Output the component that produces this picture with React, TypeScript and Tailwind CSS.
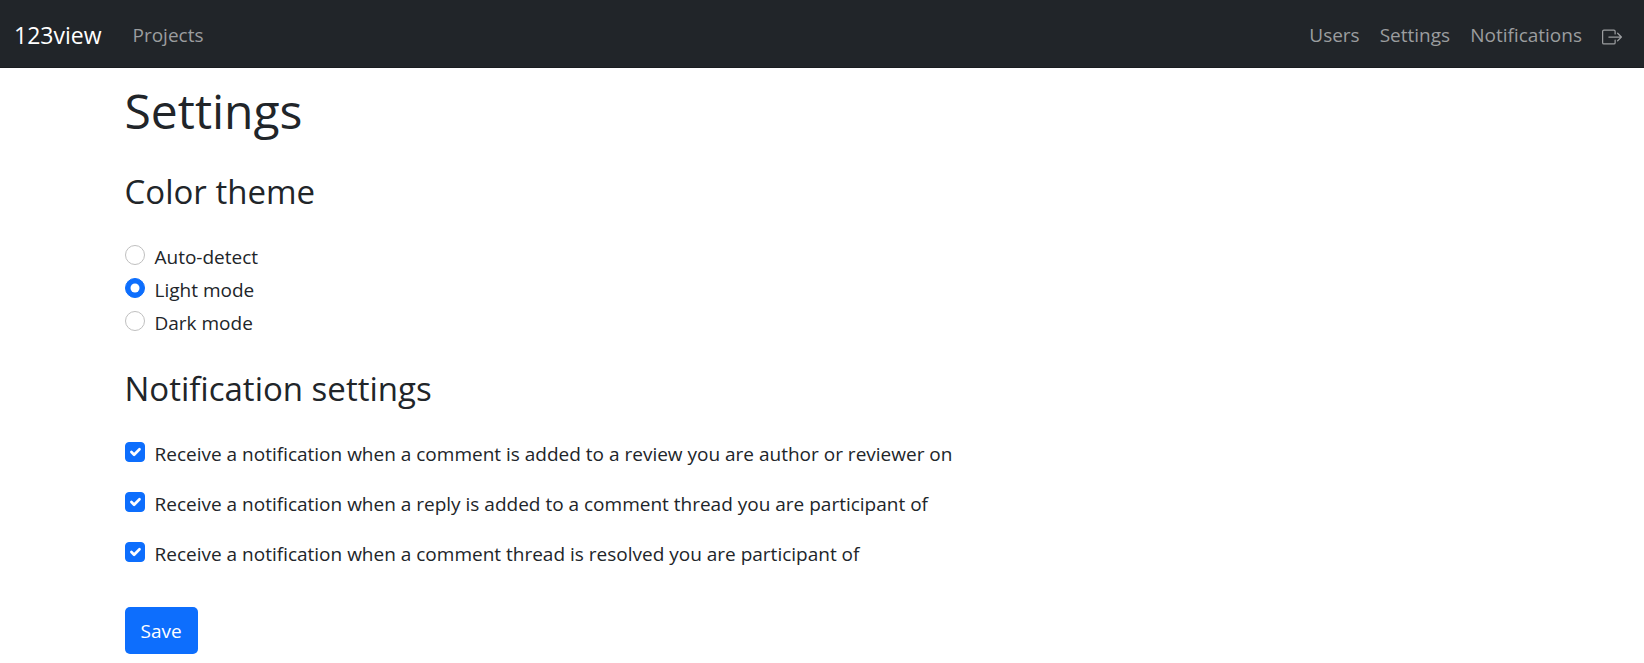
import { useState } from 'react';
import { BsBoxArrowRight } from 'react-icons/bs';

const themes = [
  { value: 'auto', label: 'Auto-detect' },
  { value: 'light', label: 'Light mode' },
  { value: 'dark', label: 'Dark mode' },
];

const notifications = [
  { id: 'comment-added', label: 'Receive a notification when a comment is added to a review you are author or reviewer on' },
  { id: 'comment-reply', label: 'Receive a notification when a reply is added to a comment thread you are participant of' },
  { id: 'comment-resolved', label: 'Receive a notification when a comment thread is resolved you are participant of' },
];

function NavLink({ href, children }: { href: string; children: string }) {
  return (
    <a href={href} className="text-[#9b9d9f] hover:text-white">
      {children}
    </a>
  );
}

function Navbar() {
  return (
    <nav className="flex h-[68px] items-center border-b border-[#1a1d20] bg-[#212529] pt-[3px] pr-[22px] pl-[14px]">
      <a href="#home" className="mr-[31px] text-[23px] text-white">
        123view
      </a>
      <NavLink href="#projects">Projects</NavLink>
      <div className="ml-auto flex items-center gap-5">
        <NavLink href="#users">Users</NavLink>
        <NavLink href="#settings">Settings</NavLink>
        <NavLink href="#notifications">Notifications</NavLink>
        <a href="#logout" aria-label="Log out" className="pt-[3px] text-[#9b9d9f] hover:text-white">
          <BsBoxArrowRight className="size-5" />
        </a>
      </div>
    </nav>
  );
}

function ThemeOption({ value, label, checked, onSelect }: { value: string; label: string; checked: boolean; onSelect: () => void }) {
  const id = `theme-${value}`;
  return (
    <div className="flex gap-[10px]">
      <span className="mt-1 grid size-5 shrink-0">
        <input
          type="radio"
          id={id}
          name="theme"
          value={value}
          checked={checked}
          onChange={onSelect}
          className="peer col-start-1 row-start-1 size-5 appearance-none rounded-full border border-[#bfbfbf] bg-white checked:border-[#0d6efd] checked:bg-[#0d6efd]"
        />
        <svg viewBox="0 0 20 20" aria-hidden="true" className="pointer-events-none col-start-1 row-start-1 hidden size-5 peer-checked:block">
          <circle cx="10" cy="10" r="4.5" fill="#fff" />
        </svg>
      </span>
      <label htmlFor={id}>{label}</label>
    </div>
  );
}

function NotificationOption({ id, label }: { id: string; label: string }) {
  return (
    <div className="flex gap-[10px]">
      <span className="mt-1 grid size-5 shrink-0">
        <input
          type="checkbox"
          id={id}
          defaultChecked
          className="peer col-start-1 row-start-1 size-5 appearance-none rounded-sm border border-[#bfbfbf] bg-white checked:border-[#0d6efd] checked:bg-[#0d6efd]"
        />
        <svg viewBox="0 0 20 20" aria-hidden="true" className="pointer-events-none col-start-1 row-start-1 hidden size-5 p-px peer-checked:block">
          <path d="M6 10l3 3l6-6" fill="none" stroke="#fff" strokeWidth="3" strokeLinecap="round" strokeLinejoin="round" />
        </svg>
      </span>
      <label htmlFor={id}>{label}</label>
    </div>
  );
}

export default function App() {
  const [theme, setTheme] = useState('light');

  return (
    <div className="min-h-screen bg-white font-['Open_Sans','Noto_Sans',sans-serif] text-[19px] leading-[33px] text-[#212529]">
      <Navbar />
      <main className="mx-auto max-w-[1425px] px-[15px] pt-[14px]">
        <h1 className="mb-[31px] text-[48px] leading-[58px]">Settings</h1>
        <form onSubmit={(event) => event.preventDefault()}>
          <fieldset>
            <legend className="mb-7 text-[33px] leading-[42px]">Color theme</legend>
            {themes.map((option) => (
              <ThemeOption key={option.value} {...option} checked={theme === option.value} onSelect={() => setTheme(option.value)} />
            ))}
          </fieldset>
          <fieldset className="mt-7">
            <legend className="mb-7 text-[33px] leading-[42px]">Notification settings</legend>
            <div className="flex flex-col gap-[17px]">
              {notifications.map((option) => (
                <NotificationOption key={option.id} {...option} />
              ))}
            </div>
          </fieldset>
          <button type="submit" className="mt-9 rounded-[5px] bg-[#0d6efd] px-4 pt-2 pb-1.5 text-white hover:bg-[#0b5ed7]">
            Save
          </button>
        </form>
      </main>
    </div>
  );
}
